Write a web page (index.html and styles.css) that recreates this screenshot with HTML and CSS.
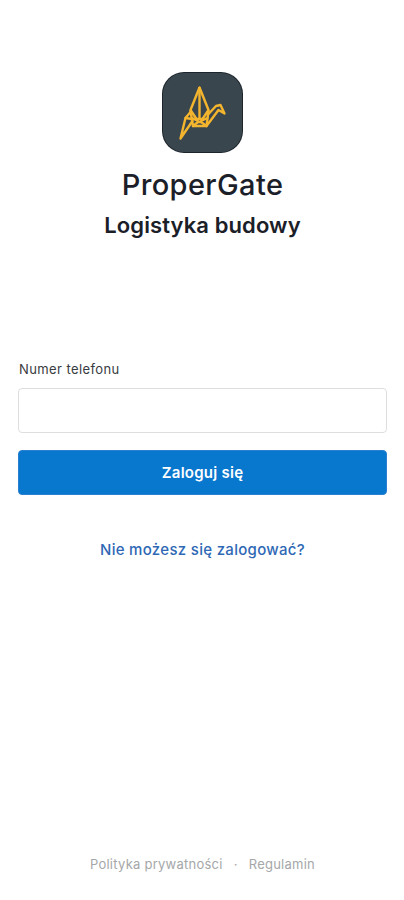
FILE: index.html
```html
<!DOCTYPE html>
<html lang="pl">
<head>
    <meta charset="UTF-8">
    <meta name="viewport" content="width=device-width, initial-scale=1.0">
    <link rel="stylesheet" href="styles.css">
    <title>ProperGate</title>
</head>
<body>
<div class="page">
    <header class="brand">
        <svg class="logo" viewBox="0 0 81 81" aria-hidden="true">
            <rect width="81" height="81" rx="22" fill="#1c252b"/>
            <rect x="1" y="1" width="79" height="79" rx="21" fill="#3a464e"/>
            <g fill="none" stroke="#f4b52e" stroke-width="2.4" stroke-linejoin="round" stroke-linecap="round">
                <path d="M37.5 15.5 L28.5 38 L34.5 47 H40.5 L46.5 38 Z"/>
                <path d="M37.5 16 V46"/>
                <path d="M28.5 40 L23.5 46 L18.5 66.5 L30.5 49"/>
                <path d="M23.5 46 L30 47"/>
                <path d="M28.5 39 L31 54 L36 50 H39 L44.5 54 L46.5 39"/>
                <path d="M30 46 L36 49 M45.5 46 L39 49 M31 54 H44"/>
                <path d="M46.5 42 L54 34 L58.5 33 L62.5 41.5 L56.5 38 L44.5 54"/>
            </g>
        </svg>
        <h1 class="title">ProperGate</h1>
        <h2 class="subtitle">Logistyka budowy</h2>
    </header>

    <form class="login-form" id="login-form" action="" method="POST">
        <label for="phone">Numer telefonu</label>
        <input name="phone" id="phone" type="tel" required>
        <button class="btn" type="submit">Zaloguj się</button>
    </form>

    <a class="help" href="#">Nie możesz się zalogować?</a>

    <footer class="footer">
        <a href="#">Polityka prywatności</a>
        <span class="dot">·</span>
        <a href="#">Regulamin</a>
    </footer>
</div>
</body>
</html>
```
FILE: styles.css
```css
/* Global */
*, :after, :before {
    box-sizing: border-box;
    margin: 0;
}

body {
    background: #fff;
    color: #1b2028;
    font-family: Inter, "Liberation Sans", sans-serif;
}

a {
    text-decoration: none;
}

.page {
    display: flex;
    flex-direction: column;
    min-height: 900px;
    padding: 72px 17px 26px 18px;
}

/* Header */
.brand {
    display: flex;
    flex-direction: column;
    align-items: center;
    height: 288px;
}

.logo {
    width: 81px;
    height: 81px;
}

.title {
    margin-top: 12px;
    font-size: 29px;
    font-weight: 500;
    line-height: 40px;
    letter-spacing: 0.4px;
}

.subtitle {
    margin-top: 5px;
    font-size: 22px;
    font-weight: 600;
    line-height: 30px;
    letter-spacing: 0.1px;
}

/* Form */
.login-form {
    display: flex;
    flex-direction: column;
}

label {
    height: 28px;
    padding-left: 1px;
    font-size: 13px;
    line-height: 19px;
    letter-spacing: 0.4px;
    color: #383b40;
}

input {
    width: 100%;
    height: 45px;
    padding: 0 12px;
    border: 1px solid #dedede;
    border-radius: 4px;
    outline: 0;
    font-size: 16px;
}

.btn {
    height: 45px;
    margin-top: 17px;
    border: 1px solid #2a7fd0;
    border-radius: 4px;
    background: #0877ce;
    color: #fff;
    font-family: inherit;
    font-size: 15px;
    font-weight: 600;
    letter-spacing: 0.25px;
    cursor: pointer;
}

/* Links */
.help {
    align-self: center;
    margin-top: 44px;
    font-size: 15px;
    font-weight: 500;
    line-height: 22px;
    letter-spacing: 0.3px;
    color: #2e68b5;
}

.footer {
    display: flex;
    justify-content: center;
    gap: 11px;
    margin-top: auto;
    font-size: 13px;
    line-height: 20px;
    letter-spacing: 0.25px;
    color: #a5a7a9;
}

.footer a {
    color: inherit;
}
```
